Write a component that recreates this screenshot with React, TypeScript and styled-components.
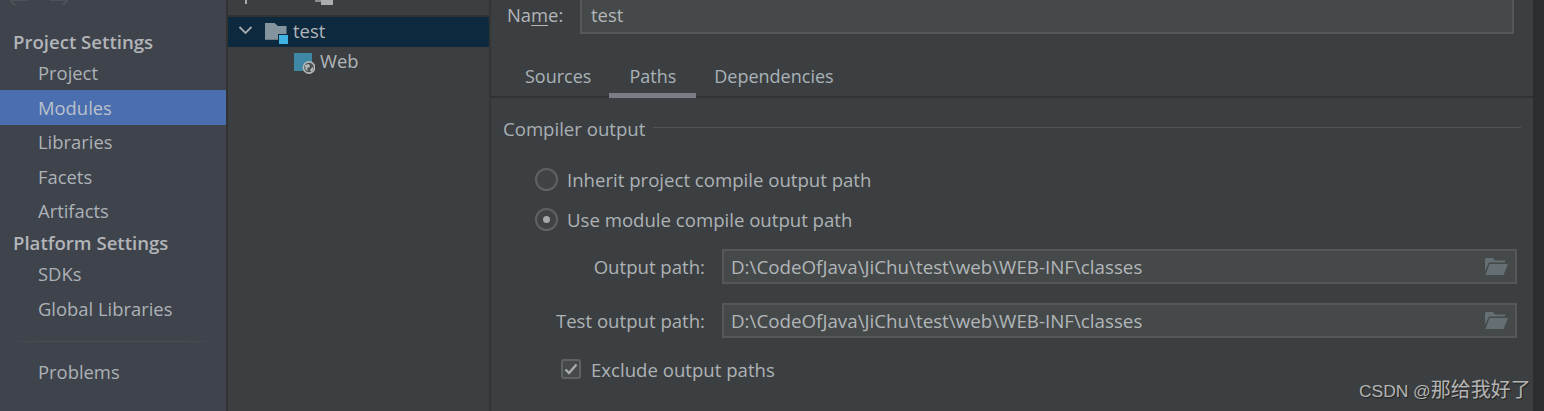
import React from 'react';
import styled, { createGlobalStyle } from 'styled-components';

const Global = createGlobalStyle`
  html, body { margin: 0; padding: 0; background: #3c3f41; overflow: hidden; }
  body { font-family: "Open Sans", "Noto Sans", "Liberation Sans", sans-serif; }
  #root { height: 411px; }
`;
const Page = styled.div`
  position: relative; display: flex; width: 1544px; height: 411px; overflow: hidden;
  background: #3c3f41; color: #b4b8bb; font-size: 18.4px;
`;
const Sidebar = styled.nav`
  width: 226px; flex: none; background: #3e434c; display: flex; flex-direction: column;
  border-right: 2px solid #323232; box-sizing: content-box;
`;
const NavStrip = styled.div`
  height: 27.5px; flex: none; padding-left: 10px; display: flex; gap: 22px; align-items: flex-start;
`;
const Heading = styled.div<{ $tall?: boolean }>`
  height: ${p => (p.$tall ? 28.5 : 28)}px; flex: none; line-height: 28px; padding-left: 13px; font-weight: 600; font-size: 18.6px; color: #b2b5b8;
`;
const Item = styled.div<{ $active?: boolean }>`
  height: ${p => (p.$active ? 35 : 34.5)}px; flex: none; line-height: ${p => (p.$active ? 36 : 34.5)}px; padding-left: 38px;
  background: ${p => (p.$active ? '#4b6eaf' : 'transparent')};
  color: ${p => (p.$active ? '#b9c1cc' : '#adb2b6')};
`;
const Sep = styled.div`
  height: 1px; flex: none; margin: 14.5px 8px 13px;
  background: linear-gradient(90deg, #3e434c, #4c4d4f 15%, #4c4d4f 85%, #3e434c);
`;
const Tree = styled.div`
  width: 261px; flex: none; display: flex; flex-direction: column; border-right: 2px solid #333536;
`;
const TreeToolbar = styled.div`
  height: 15px; border-bottom: 2px solid #323232; display: flex; align-items: flex-start; padding-left: 15px; gap: 66px;
`;
const TreeRow = styled.div<{ $sel?: boolean; $indent: number }>`
  height: 30px; display: flex; align-items: center; padding-left: ${p => p.$indent}px;
  background: ${p => (p.$sel ? '#0d293e' : 'transparent')};
  color: #b1b6ba;
`;
const TreeLabel = styled.span`
  margin-top: -3px; margin-left: 5px;
`;
const Main = styled.main`
  flex: 1; display: flex; flex-direction: column; min-width: 0;
`;
const NameRow = styled.div`
  height: 34px; display: flex; align-items: center; padding-left: 16px; flex: none;
`;
const NameLabel = styled.label`
  width: 73px; flex: none; margin-top: -6px; color: #b2b6b9;
  u { text-decoration-thickness: 1px; text-underline-offset: 3px; }
`;
const Field = styled.div`
  background: #45494a; border: 2px solid #555859; box-sizing: border-box; color: #b2b6b9;
  display: flex; align-items: center; justify-content: space-between;
`;
const NameField = styled(Field)`
  width: 934px; height: 34px; border-top: 0; padding: 0 9px 3px;
`;
const Tabs = styled.div`
  height: 64px; flex: none; display: flex; align-items: flex-end; padding-left: 15px;
  box-shadow: inset 0 -2px 0 #323232; width: 1042px; box-sizing: border-box; font-size: 18px;
`;
const Tab = styled.div<{ $active?: boolean }>`
  height: 45px; line-height: 46px; box-sizing: border-box;
  padding: 0 ${p => (p.$active ? 20 : 19)}px;
  margin: 0 ${p => (p.$active ? -1 : 0)}px;
  color: #a9b2b8;
  border-bottom: 5px solid ${p => (p.$active ? '#7a7d85' : 'transparent')};
`;
const Section = styled.section`
  padding: 0 12px; width: 1018px; font-size: 18.6px;
`;
const Legend = styled.div`
  margin-top: 16px; height: 30px; line-height: 30px; display: flex; align-items: center; gap: 8px; color: #a8afb4;
  &::after { content: ""; flex: 1; height: 1px; background: #515354; margin-top: -4px; }
`;
const Options = styled.div`
  padding: 15px 0 0 32px; display: flex; flex-direction: column;
`;
const OptionRow = styled.div`
  height: 40px; display: flex; align-items: center; gap: 9px; color: #adb2b5;
`;
const Radio = styled.span<{ $on?: boolean }>`
  width: 23px; height: 23px; border-radius: 50%; border: 2px solid #5f6263; box-sizing: border-box; background: #3f4344;
  display: flex; align-items: center; justify-content: center;
  &::after { content: ""; width: 7px; height: 7px; border-radius: 50%; background: ${p => (p.$on ? '#a4a8aa' : 'transparent')}; }
`;
const PathRow = styled.div<{ $top: number }>`
  display: flex; align-items: center; gap: 17px; margin-top: ${p => p.$top}px;
`;
const PathLabel = styled.label`
  width: 170px; flex: none; text-align: right; color: #adb2b5;
`;
const PathField = styled(Field)`
  width: 795px; height: 35px; padding: 0 7px 0 7px; font-size: 18.75px;
`;
const CheckRow = styled.div`
  display: flex; align-items: center; gap: 10px; margin: 21px 0 0 26px; height: 20px; color: #adb2b5;
`;
const Check = styled.span`
  width: 20px; height: 20px; box-sizing: border-box; border: 2px solid #5f6263; border-radius: 3px; background: #45494a;
  display: flex; align-items: center; justify-content: center;
`;
const Edge = styled.div`
  width: 11px; flex: none; background: #2c2d2e;
`;
const Watermark = styled.div`
  position: absolute; left: 1359px; top: 377px; font-family: "Liberation Sans", sans-serif;
  font-size: 17.4px; line-height: 24px; color: #b4b4b4; text-shadow: 1px 1px 1px #222; white-space: nowrap;
`;
const WatermarkCjk = styled.span`
  font-family: "Noto Sans CJK SC", sans-serif; font-size: 20px;
`;

const FolderOpen = () => (
  <svg width="23" height="17" viewBox="0 0 23 17">
    <path d="M0 1 L1 0 H8 L10 2.5 H20 V4.5 H4 L0 13 Z" fill="#646f73" />
    <path d="M4.5 6 H23 L18.5 17 H0.5 Z" fill="#646f73" />
  </svg>
);
const ModuleIcon = () => (
  <svg width="23" height="21" viewBox="0 0 23 21" style={{ flex: 'none', marginTop: 3 }}>
    <path d="M0 0 H9.5 L13 3 H21.5 V17 H0 Z" fill="#84949f" />
    <path d="M0 16 H13 V17 H0 Z" fill="#6d7b85" />
    <rect x="13" y="11" width="10" height="10" fill="#0d293e" />
    <rect x="14" y="12" width="9" height="9" fill="#3fb3e2" />
  </svg>
);
const WebIcon = () => (
  <svg width="21" height="21" viewBox="0 0 21 21" style={{ flex: 'none', marginTop: 3 }}>
    <rect x="0" y="0" width="18" height="18" fill="#3e87a5" />
    <circle cx="15" cy="14.5" r="6.4" fill="#b4b8ba" />
    <circle cx="15" cy="14.5" r="4.8" fill="#4d5154" />
    <path d="M11 12 L15 11 L16 14 L13 15 L14 18 L11.5 16.5 Z M16 17 L18.5 14 L19.5 15.5 L17.5 19 Z" fill="#b4b8ba" />
  </svg>
);

export default function App() {
  return (
    <Page>
      <Global />
      <Sidebar>
        <NavStrip>
          <svg width="18" height="6" viewBox="0 0 18 6"><path d="M0 0 L5 5 M0 0 H18" stroke="#4e5258" strokeWidth="2" fill="none" /></svg>
          <svg width="18" height="6" viewBox="0 0 18 6"><path d="M18 0 L13 5 M0 0 H18" stroke="#4e5258" strokeWidth="2" fill="none" /></svg>
        </NavStrip>
        <Heading>Project Settings</Heading>
        <Item>Project</Item>
        <Item $active>Modules</Item>
        <Item>Libraries</Item>
        <Item>Facets</Item>
        <Item>Artifacts</Item>
        <Heading $tall>Platform Settings</Heading>
        <Item>SDKs</Item>
        <Item>Global Libraries</Item>
        <Sep />
        <Item>Problems</Item>
      </Sidebar>
      <Tree>
        <TreeToolbar>
          <svg width="6" height="4" viewBox="0 0 6 4"><rect x="2" y="0" width="2" height="4" fill="#a9adaf" /></svg>
          <svg width="18" height="5" viewBox="0 0 18 5"><rect x="0" y="0" width="6" height="2" fill="#8b8e90" /><rect x="6" y="0" width="12" height="5" fill="#a9adaf" /></svg>
        </TreeToolbar>
        <TreeRow $sel $indent={10}>
          <svg width="15" height="9" viewBox="0 0 15 9" style={{ marginRight: 12, marginTop: -3 }}><path d="M1.5 1 L7.5 7 L13.5 1" stroke="#a6abae" strokeWidth="1.8" fill="none" /></svg>
          <ModuleIcon />
          <TreeLabel>test</TreeLabel>
        </TreeRow>
        <TreeRow $indent={66}>
          <WebIcon />
          <TreeLabel>Web</TreeLabel>
        </TreeRow>
      </Tree>
      <Main>
        <NameRow>
          <NameLabel>Na<u>m</u>e:</NameLabel>
          <NameField>test</NameField>
        </NameRow>
        <Tabs>
          <Tab>Sources</Tab>
          <Tab $active>Paths</Tab>
          <Tab>Dependencies</Tab>
        </Tabs>
        <Section>
          <Legend>Compiler output</Legend>
          <Options>
            <OptionRow><Radio />Inherit project compile output path</OptionRow>
            <OptionRow><Radio $on />Use module compile output path</OptionRow>
            <PathRow $top={10}>
              <PathLabel>Output path:</PathLabel>
              <PathField>D:\CodeOfJava\JiChu\test\web\WEB-INF\classes<FolderOpen /></PathField>
            </PathRow>
            <PathRow $top={19}>
              <PathLabel>Test output path:</PathLabel>
              <PathField>D:\CodeOfJava\JiChu\test\web\WEB-INF\classes<FolderOpen /></PathField>
            </PathRow>
            <CheckRow>
              <Check>
                <svg width="14" height="12" viewBox="0 0 14 12"><path d="M1.5 6.5 L5 10 L12.5 1.5" stroke="#a8acae" strokeWidth="2.4" fill="none" /></svg>
              </Check>
              Exclude output paths
            </CheckRow>
          </Options>
        </Section>
      </Main>
      <Edge />
      <Watermark>CSDN @<WatermarkCjk>那给我好了</WatermarkCjk></Watermark>
    </Page>
  );
}
